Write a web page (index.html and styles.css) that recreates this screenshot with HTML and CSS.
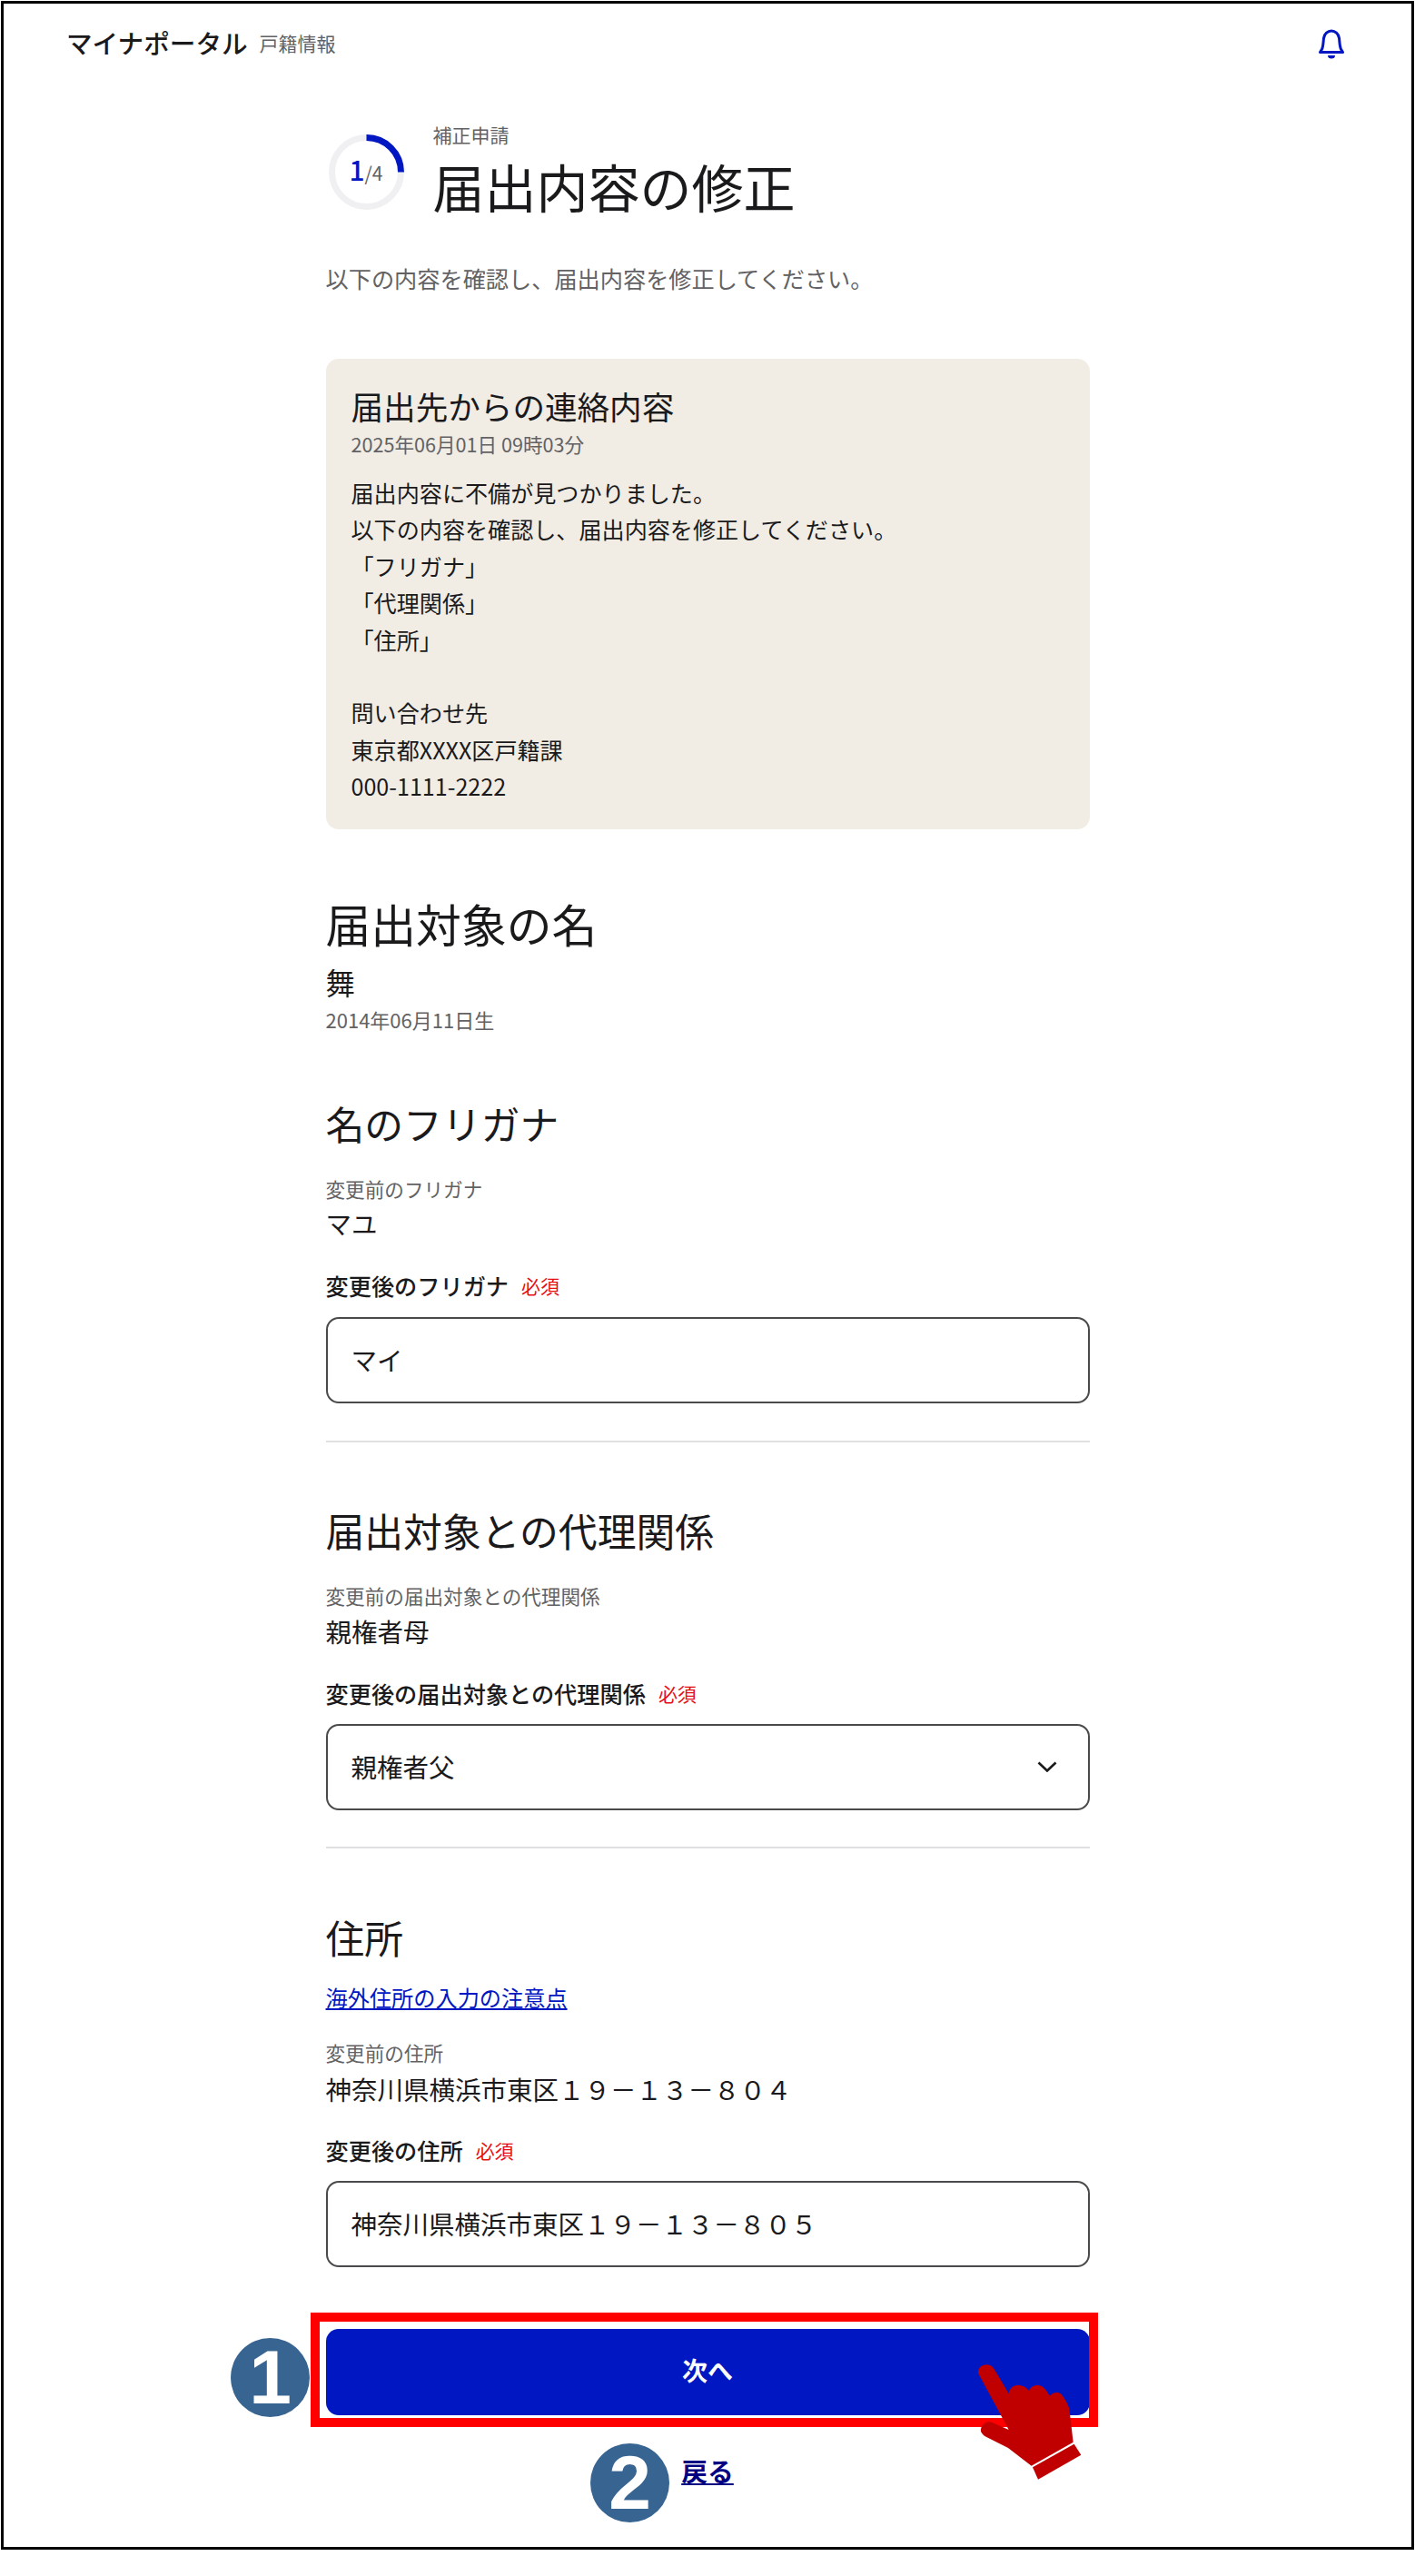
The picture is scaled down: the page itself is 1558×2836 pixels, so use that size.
FILE: index.html
```html
<!DOCTYPE html>
<html lang="ja">
<head>
<meta charset="utf-8">
<title>届出内容の修正</title>
<link rel="stylesheet" href="styles.css">
</head>
<body>
<div class="frame">
  <header class="topbar">
    <div class="brand"><span class="brand-name">マイナポータル</span><span class="brand-sub">戸籍情報</span></div>
    <svg class="bell" viewBox="0 0 28 33" aria-hidden="true">
      <path class="bell-body" d="M1.5 25.5 L3.6 22 C5 19 5 14 5.5 10 C6.2 5 10 2 14 2 C18 2 21.8 5 22.5 10 C23 14 23 19 24.4 22 L26.5 25.5 Z"/>
      <path class="bell-clapper" d="M10 29 h8 a4 3.6 0 0 1 -8 0 z"/>
    </svg>
  </header>

  <main class="content">
    <div class="page-head">
      <div class="ring">
        <svg class="ring-svg" viewBox="0 0 83 83" aria-hidden="true">
          <circle class="ring-track" cx="41.5" cy="41.5" r="38"/>
          <path class="ring-arc" d="M41.5 3.5 A38 38 0 0 1 79.5 41.5"/>
        </svg>
        <div class="ring-text"><span class="ring-now">1</span><span class="ring-total">/4</span></div>
      </div>
      <div class="head-text">
        <div class="eyebrow">補正申請</div>
        <h1 class="title">届出内容の修正</h1>
      </div>
    </div>
    <p class="lead">以下の内容を確認し、届出内容を修正してください。</p>

    <section class="notice">
      <h2 class="notice-title">届出先からの連絡内容</h2>
      <div class="notice-date">2025年06月01日 09時03分</div>
      <div class="notice-body">
        <div>届出内容に不備が見つかりました。</div>
        <div>以下の内容を確認し、届出内容を修正してください。</div>
        <div>「フリガナ」</div>
        <div>「代理関係」</div>
        <div>「住所」</div>
        <div>&nbsp;</div>
        <div>問い合わせ先</div>
        <div>東京都XXXX区戸籍課</div>
        <div>000-1111-2222</div>
      </div>
    </section>

    <h2 class="target-title">届出対象の名</h2>
    <div class="target-name">舞</div>
    <div class="target-birth">2014年06月11日生</div>

    <section class="block block-kana">
      <h3 class="block-title">名のフリガナ</h3>
      <div class="before-label">変更前のフリガナ</div>
      <div class="before-value">マユ</div>
      <div class="after-label">変更後のフリガナ<span class="required">必須</span></div>
      <div class="field">マイ</div>
    </section>
    <hr class="rule">

    <section class="block block-rel">
      <h3 class="block-title">届出対象との代理関係</h3>
      <div class="before-label">変更前の届出対象との代理関係</div>
      <div class="before-value">親権者母</div>
      <div class="after-label">変更後の届出対象との代理関係<span class="required">必須</span></div>
      <div class="field field-select">親権者父
        <svg class="chevron" viewBox="0 0 22 12" aria-hidden="true"><path d="M1.5 1.5 L11 10.5 L20.5 1.5"/></svg>
      </div>
    </section>
    <hr class="rule">

    <section class="block block-addr">
      <h3 class="block-title">住所</h3>
      <a class="note-link" href="#">海外住所の入力の注意点</a>
      <div class="before-label">変更前の住所</div>
      <div class="before-value">神奈川県横浜市東区１９－１３－８０４</div>
      <div class="after-label">変更後の住所<span class="required">必須</span></div>
      <div class="field">神奈川県横浜市東区１９－１３－８０５</div>
    </section>

    <button class="next" type="button">次へ</button>
    <a class="back" href="#">戻る</a>
  </main>

  <div class="callout-box"></div>
  <div class="badge badge-one">1</div>
  <div class="badge badge-two">2</div>
  <svg class="hand" viewBox="0 0 570 510" aria-hidden="true">
    <path d="M112 100 C108 82 122 70 140 70 C152 70 160 76 166 88 L212 165 C216 145 228 138 242 138 C258 138 270 145 279 156 C285 142 296 138 308 138 C324 138 336 152 347 173 C356 162 372 158 384 166 C396 180 408 200 412 215 L425 326 L287 404 L210 345 L140 310 C124 302 118 292 120 283 C124 264 140 256 156 260 L212 285 Z"/>
    <path d="M291 409 L428 332 L451 368 L309 449 Z"/>
  </svg>
</div>
</body>
</html>
```

FILE: styles.css
```css
* { box-sizing: border-box; }

html, body { margin: 0; background: #fff; }

body {
  height: 2836px;
  padding: 1px;
  font-family: "Noto Sans CJK JP", "Noto Sans", sans-serif;
  color: #1a1a1c;
}

.frame {
  position: relative;
  width: 1556px;
  height: 2806px;
  border: 3px solid #000;
  background: #fff;
}

.topbar {
  height: 92px;
  padding: 0 74px 6px 69px;
  display: flex;
  align-items: center;
  justify-content: space-between;
}

.brand { display: flex; align-items: center; gap: 13px; }
.brand-name { font-size: 28.6px; font-weight: 500; line-height: 40px; }
.brand-sub { font-size: 21px; line-height: 40px; color: #626264; }

.bell { width: 28px; height: 33px; margin-top: 3px; }
.bell-body { fill: none; stroke: #0017c1; stroke-width: 3; stroke-linejoin: round; }
.bell-clapper { fill: #0017c1; }

.content { width: 841px; margin: 0 auto; padding-top: 37px; }

.page-head { display: flex; align-items: flex-start; gap: 32px; padding-left: 3px; }

.ring { position: relative; width: 83px; height: 83px; margin-top: 15px; flex: none; }
.ring-svg { display: block; width: 83px; height: 83px; }
.ring-track { fill: none; stroke: #f0f0f2; stroke-width: 7; }
.ring-arc { fill: none; stroke: #0017c1; stroke-width: 7; }
.ring-text {
  position: absolute;
  inset: 0;
  display: flex;
  align-items: baseline;
  justify-content: center;
  padding-top: 16px;
  line-height: 44px;
}
.ring-now { font-size: 30px; font-weight: 500; color: #0017c1; }
.ring-total { font-size: 21px; color: #626264; }

.eyebrow { font-size: 21px; line-height: 30px; color: #626264; }
.title { margin: 2px 0 0; font-size: 57px; font-weight: 400; line-height: 78px; }

.lead { margin: 43px 0 0; font-size: 25.2px; line-height: 40px; color: #626264; }

.notice {
  margin-top: 69px;
  padding: 27px 28px 27px;
  background: #f1ede5;
  border-radius: 14px;
}
.notice-title { margin: 0; font-size: 35.6px; font-weight: 400; line-height: 50px; }
.notice-date { margin-top: 1px; font-size: 21.6px; line-height: 32px; color: #626264; }
.notice-body { margin-top: 17px; font-size: 25.1px; line-height: 40.4px; }

.target-title { margin: 68px 0 0; font-size: 49.8px; font-weight: 400; line-height: 70px; }
.target-name { margin-top: 7px; font-size: 32.4px; line-height: 46px; }
.target-birth { margin-top: 1px; font-size: 22px; line-height: 34px; color: #626264; }

.block-title { margin: 0; font-size: 42.8px; font-weight: 400; line-height: 60px; }
.before-label { margin-top: 27px; font-size: 21.6px; line-height: 32px; color: #626264; }
.before-value { font-size: 28.5px; line-height: 44px; }
.after-label {
  display: flex;
  align-items: center;
  gap: 14px;
  height: 34px;
  font-size: 25.2px;
  font-weight: 500;
  line-height: 34px;
}
.required { font-size: 21px; font-weight: 400; color: #e60f14; }

.field {
  display: flex;
  align-items: center;
  justify-content: space-between;
  height: 95px;
  margin-top: 18px;
  padding: 0 26px 1px;
  border: 2px solid #4a4a4c;
  border-radius: 14px;
  font-size: 28.5px;
  line-height: 40px;
  background: #fff;
}
.chevron { width: 22px; height: 12px; margin-right: 8px; }
.chevron path { fill: none; stroke: #1a1a1c; stroke-width: 2.6; }

.rule { height: 2px; margin: 0; border: 0; background: #e0e0e2; }

.block-kana { margin-top: 67px; }
.block-kana .after-label { margin-top: 29px; }
.block-kana + .rule { margin-top: 41px; }
.block-rel { margin-top: 66px; }
.block-rel .before-value { margin-top: 1px; }
.block-rel .after-label { margin-top: 29px; }
.block-rel .field { margin-top: 17px; }
.block-rel + .rule { margin-top: 40px; }
.block-addr { margin-top: 67px; }
.block-addr .before-label { margin-top: 25px; }
.block-addr .before-value { margin-top: 2px; }
.block-addr .after-label { margin-top: 28px; }
.block-addr .field { margin-top: 17px; }

.note-link {
  display: block;
  margin-top: 17px;
  font-size: 24.2px;
  line-height: 40px;
  color: #0017c1;
  text-decoration: underline;
}

.next {
  display: block;
  width: 100%;
  height: 95px;
  margin-top: 68px;
  padding: 0 0 4px;
  border: 0;
  border-radius: 14px;
  background: #0017c1;
  color: #fff;
  font-family: inherit;
  font-size: 28px;
  font-weight: 700;
}

.back {
  display: block;
  margin-top: 41px;
  font-size: 28.8px;
  font-weight: 700;
  line-height: 40px;
  text-align: center;
  color: #000082;
  text-decoration: underline;
}

.callout-box {
  position: absolute;
  left: 338px;
  top: 2542px;
  width: 867px;
  height: 126px;
  border: 10px solid #f00;
}

.badge {
  position: absolute;
  width: 87px;
  height: 87px;
  border-radius: 50%;
  background: #376491;
  color: #fff;
  font-family: "Liberation Sans", Arial, sans-serif;
  font-size: 84px;
  font-weight: 700;
  line-height: 87px;
  text-align: center;
}
.badge-one { left: 250px; top: 2570px; }
.badge-two { left: 646px; top: 2686px; }

.hand {
  position: absolute;
  left: 1036px;
  top: 2576px;
  width: 190px;
  height: 170px;
  fill: #c00000;
}
```
